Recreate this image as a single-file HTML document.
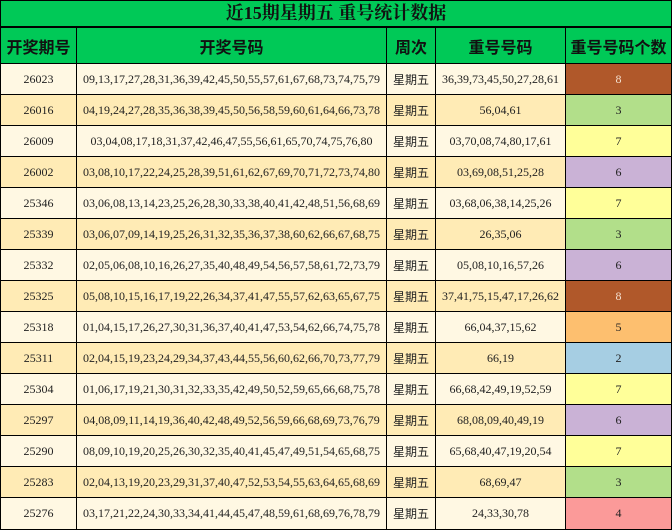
<!DOCTYPE html>
<html><head><meta charset="utf-8"><style>
*{box-sizing:border-box;margin:0;padding:0}
body{width:672px;height:530px;background:#fff;overflow:hidden;font-family:"Liberation Serif","Noto Serif CJK SC","Noto Sans CJK SC",serif;color:#222}
.t{position:absolute;left:0;top:0;width:672px;height:28px;background:#00c957;border:1px solid #000;border-bottom:2px solid #000;text-align:center;font-weight:bold;font-size:18px;line-height:25px;color:#111}
.r{position:absolute;left:0;width:672px;display:flex;border-bottom:1px solid #000}
.r div{flex-shrink:0;overflow:hidden;border-right:1px solid #000;display:flex;align-items:center;justify-content:center;font-size:12px;white-space:nowrap}
.r div:first-child{border-left:1px solid #000}
.h{top:28px;height:36px;background:#00c957}
.h div{font-size:16px !important;font-weight:bold;font-family:"Noto Sans CJK SC",sans-serif;color:#111}
.c1{width:77px}.c2{width:310px}.c3{width:49px}.c4{width:130px}.c5{width:106px}
.c3w{font-family:"Noto Sans CJK SC",sans-serif;font-size:12px}
.o{background:#fff8e3}.e{background:#ffebb5}
</style></head><body>
<div class="t">近15期星期五 重号统计数据</div>
<div class="r h"><div class="c1">开奖期号</div><div class="c2">开奖号码</div><div class="c3">周次</div><div class="c4">重号号码</div><div class="c5">重号号码个数</div></div>
<div class="r o" style="top:64px;height:31px"><div class="c1">26023</div><div class="c2">09,13,17,27,28,31,36,39,42,45,50,55,57,61,67,68,73,74,75,79</div><div class="c3 c3w">星期五</div><div class="c4">36,39,73,45,50,27,28,61</div><div class="c5" style="background:#b0582a;color:#f3e0d0">8</div></div>
<div class="r e" style="top:95px;height:31px"><div class="c1">26016</div><div class="c2">04,19,24,27,28,35,36,38,39,45,50,56,58,59,60,61,64,66,73,78</div><div class="c3 c3w">星期五</div><div class="c4">56,04,61</div><div class="c5" style="background:#b2df8a">3</div></div>
<div class="r o" style="top:126px;height:31px"><div class="c1">26009</div><div class="c2">03,04,08,17,18,31,37,42,46,47,55,56,61,65,70,74,75,76,80</div><div class="c3 c3w">星期五</div><div class="c4">03,70,08,74,80,17,61</div><div class="c5" style="background:#ffff99">7</div></div>
<div class="r e" style="top:157px;height:31px"><div class="c1">26002</div><div class="c2">03,08,10,17,22,24,25,28,39,51,61,62,67,69,70,71,72,73,74,80</div><div class="c3 c3w">星期五</div><div class="c4">03,69,08,51,25,28</div><div class="c5" style="background:#cab2d6">6</div></div>
<div class="r o" style="top:188px;height:31px"><div class="c1">25346</div><div class="c2">03,06,08,13,14,23,25,26,28,30,33,38,40,41,42,48,51,56,68,69</div><div class="c3 c3w">星期五</div><div class="c4">03,68,06,38,14,25,26</div><div class="c5" style="background:#ffff99">7</div></div>
<div class="r e" style="top:219px;height:31px"><div class="c1">25339</div><div class="c2">03,06,07,09,14,19,25,26,31,32,35,36,37,38,60,62,66,67,68,75</div><div class="c3 c3w">星期五</div><div class="c4">26,35,06</div><div class="c5" style="background:#b2df8a">3</div></div>
<div class="r o" style="top:250px;height:31px"><div class="c1">25332</div><div class="c2">02,05,06,08,10,16,26,27,35,40,48,49,54,56,57,58,61,72,73,79</div><div class="c3 c3w">星期五</div><div class="c4">05,08,10,16,57,26</div><div class="c5" style="background:#cab2d6">6</div></div>
<div class="r e" style="top:281px;height:31px"><div class="c1">25325</div><div class="c2">05,08,10,15,16,17,19,22,26,34,37,41,47,55,57,62,63,65,67,75</div><div class="c3 c3w">星期五</div><div class="c4">37,41,75,15,47,17,26,62</div><div class="c5" style="background:#b0582a;color:#f3e0d0">8</div></div>
<div class="r o" style="top:312px;height:31px"><div class="c1">25318</div><div class="c2">01,04,15,17,26,27,30,31,36,37,40,41,47,53,54,62,66,74,75,78</div><div class="c3 c3w">星期五</div><div class="c4">66,04,37,15,62</div><div class="c5" style="background:#fdbf6f">5</div></div>
<div class="r e" style="top:343px;height:31px"><div class="c1">25311</div><div class="c2">02,04,15,19,23,24,29,34,37,43,44,55,56,60,62,66,70,73,77,79</div><div class="c3 c3w">星期五</div><div class="c4">66,19</div><div class="c5" style="background:#a6cee3">2</div></div>
<div class="r o" style="top:374px;height:31px"><div class="c1">25304</div><div class="c2">01,06,17,19,21,30,31,32,33,35,42,49,50,52,59,65,66,68,75,78</div><div class="c3 c3w">星期五</div><div class="c4">66,68,42,49,19,52,59</div><div class="c5" style="background:#ffff99">7</div></div>
<div class="r e" style="top:405px;height:31px"><div class="c1">25297</div><div class="c2">04,08,09,11,14,19,36,40,42,48,49,52,56,59,66,68,69,73,76,79</div><div class="c3 c3w">星期五</div><div class="c4">68,08,09,40,49,19</div><div class="c5" style="background:#cab2d6">6</div></div>
<div class="r o" style="top:436px;height:31px"><div class="c1">25290</div><div class="c2">08,09,10,19,20,25,26,30,32,35,40,41,45,47,49,51,54,65,68,75</div><div class="c3 c3w">星期五</div><div class="c4">65,68,40,47,19,20,54</div><div class="c5" style="background:#ffff99">7</div></div>
<div class="r e" style="top:467px;height:31px"><div class="c1">25283</div><div class="c2">02,04,13,19,20,23,29,31,37,40,47,52,53,54,55,63,64,65,68,69</div><div class="c3 c3w">星期五</div><div class="c4">68,69,47</div><div class="c5" style="background:#b2df8a">3</div></div>
<div class="r o" style="top:498px;height:32px"><div class="c1">25276</div><div class="c2">03,17,21,22,24,30,33,34,41,44,45,47,48,59,61,68,69,76,78,79</div><div class="c3 c3w">星期五</div><div class="c4">24,33,30,78</div><div class="c5" style="background:#fb9a99">4</div></div>
</body></html>
